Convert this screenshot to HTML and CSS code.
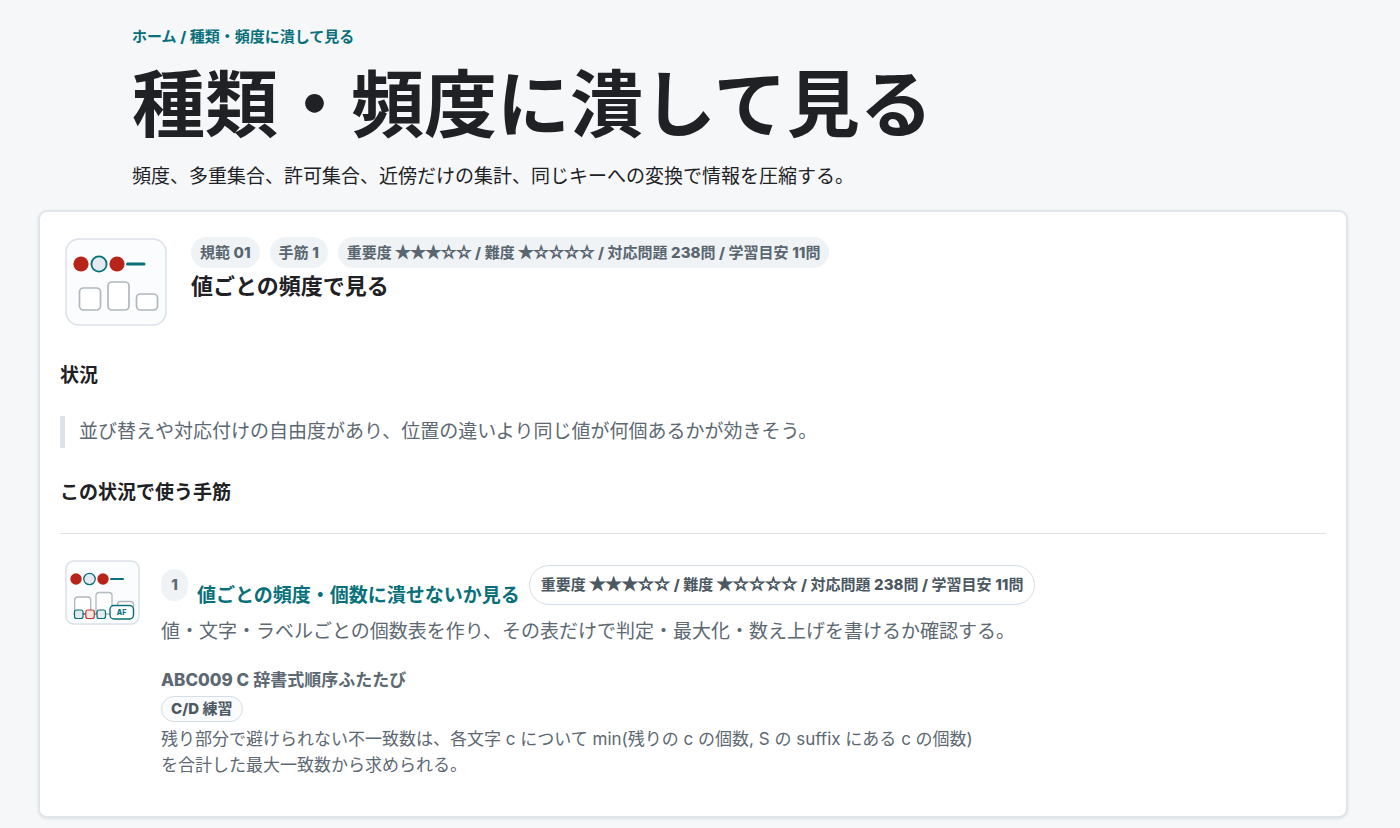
FILE: index.html
```html
<!DOCTYPE html>
<html lang="ja">
<head>
<meta charset="utf-8">
<meta name="viewport" content="width=device-width, initial-scale=1">
<title>種類・頻度に潰して見る</title>
<link rel="stylesheet" href="styles.css">
</head>
<body>
<header class="page-header">
  <nav class="breadcrumb"><a href="#">ホーム</a> <b>/</b> <a href="#">種類・頻度に潰して見る</a></nav>
  <h1 class="page-title">種類・頻度に潰して見る</h1>
  <p class="lead">頻度、多重集合、許可集合、近傍だけの集計、同じキーへの変換で情報を圧縮する。</p>
</header>
<main class="page-main">
  <article class="card">
    <div class="card-head">
      <svg class="card-figure" viewBox="0 0 102 88" aria-hidden="true">
        <rect class="frame" x="1" y="1" width="100" height="86" rx="13"/>
        <circle class="dot" cx="16" cy="26" r="7.6"/>
        <circle class="ring" cx="34" cy="26" r="7.6"/>
        <circle class="dot" cx="52" cy="26" r="7.6"/>
        <path class="dash" d="M62.500 26h16.500"/>
        <rect class="bin" x="14.500" y="50" width="21" height="22" rx="4"/>
        <rect class="bin" x="43" y="44" width="21" height="28" rx="4"/>
        <rect class="bin" x="71.500" y="56" width="21" height="16" rx="4"/>
      </svg>
      <div class="card-heading">
        <div class="tags">
          <span class="tag">規範 <b>01</b></span>
          <span class="tag">手筋 <b>1</b></span>
          <span class="tag">重要度 <span class="stars">★★★☆☆</span> <b>/</b> 難度 <span class="stars">★☆☆☆☆</span> <b>/</b> 対応問題 <b>238</b>問 <b>/</b> 学習目安 <b>11</b>問</span>
        </div>
        <h2 class="card-title">値ごとの頻度で見る</h2>
      </div>
    </div>
    <h3 class="section-title">状況</h3>
    <blockquote class="situation">並び替えや対応付けの自由度があり、位置の違いより同じ値が何個あるかが効きそう。</blockquote>
    <h3 class="section-title">この状況で使う手筋</h3>
    <section class="method">
      <svg class="method-figure" viewBox="0 0 75 65" aria-hidden="true">
        <rect class="frame" x="1" y="1" width="73" height="63" rx="8"/>
        <circle class="dot" cx="11" cy="19" r="5.700"/>
        <circle class="ring thin" cx="24.500" cy="19" r="5.700"/>
        <circle class="dot" cx="38" cy="19" r="5.700"/>
        <path class="dash thin" d="M46 19h12"/>
        <rect class="bin thin" x="9.700" y="37" width="16" height="17" rx="3"/>
        <rect class="bin thin" x="31" y="32.500" width="16" height="21.500" rx="3"/>
        <rect class="bin thin" x="52.500" y="41.500" width="16" height="12" rx="3"/>
        <path class="dash hair" d="M9 54h31"/>
        <rect class="cell" x="9.500" y="50" width="8.500" height="8.500" rx="2"/>
        <rect class="cell hot" x="20.800" y="50" width="8.500" height="8.500" rx="2"/>
        <rect class="cell" x="32" y="50" width="8.500" height="8.500" rx="2"/>
        <rect class="badge" x="45" y="45.500" width="23.500" height="13.500" rx="4"/>
        <text class="badge-text" x="56.500" y="55">AF</text>
      </svg>
      <div class="method-body">
        <div class="method-head">
          <span class="method-number">1</span>
          <a class="method-title" href="#">値ごとの頻度・個数に潰せないか見る</a>
          <span class="method-meta">重要度 <span class="stars">★★★☆☆</span> <b>/</b> 難度 <span class="stars">★☆☆☆☆</span> <b>/</b> 対応問題 <b>238</b>問 <b>/</b> 学習目安 <b>11</b>問</span>
        </div>
        <p class="method-text">値・文字・ラベルごとの個数表を作り、その表だけで判定・最大化・数え上げを書けるか確認する。</p>
        <div class="example">
          <h4 class="example-title"><b>ABC009 C</b> 辞書式順序ふたたび</h4>
          <span class="level"><b>C/D</b> 練習</span>
          <p class="example-text">残り部分で避けられない不一致数は、各文字 c について min(残りの c の個数, S の suffix にある c の個数) を合計した最大一致数から求められる。</p>
        </div>
      </div>
    </section>
  </article>
</main>
</body>
</html>
```
FILE: styles.css
```css
* { box-sizing: border-box; }

body {
  margin: 0;
  background: #f6f7f9;
  color: #202124;
  font-family: Inter, "Noto Sans CJK JP", sans-serif;
  font-size: 19px;
  line-height: 32px;
}

h1, h2, h3, h4, p, blockquote { margin: 0; }

a { color: inherit; text-decoration: none; }

b { font-weight: 800; }

.page-header { padding: 24px 132px 0; }

.breadcrumb {
  color: #08707a;
  font-size: 15px;
  font-weight: 700;
  line-height: 26px;
}

.page-title {
  margin-top: 15px;
  font-size: 73px;
  font-weight: 700;
  line-height: 80px;
}

.lead { margin-top: 16px; }

.page-main { padding: 17px 52px 10px 38px; }

.card {
  padding: 25px 20px 38px;
  background: #fff;
  border: 2px solid #dfe5eb;
  border-radius: 9px;
  box-shadow: 0 1px 3px rgba(30, 50, 70, 0.1);
}

.card-head {
  display: flex;
  gap: 24px;
  padding-left: 5px;
}

.card-figure { flex: none; width: 102px; height: 88px; margin-top: 1px; }

.tags { display: flex; flex-wrap: wrap; gap: 10px; }

.tag {
  padding: 0 9px;
  border-radius: 16px;
  background: #eff3f6;
  color: #596670;
  font-size: 15px;
  font-weight: 700;
  line-height: 31px;
}

.stars {
  font-family: "DejaVu Sans", sans-serif;
  font-size: 17px;
  font-weight: 400;
  line-height: 1;
  -webkit-text-stroke: 1px currentColor;
}

.card-title { font-size: 22px; line-height: 37px; }

.section-title { margin-top: 26px; font-size: 19px; line-height: 32px; }
.card-head + .section-title { margin-top: 34px; }

.situation {
  margin-top: 24px;
  padding-left: 14px;
  border-left: 5px solid #dce2ea;
  color: #5c6872;
}

.situation + .section-title { margin-top: 29px; }

.method {
  display: flex;
  gap: 21px;
  margin-top: 24px;
  padding: 26px 0 0 5px;
  border-top: 1px solid #dfe3e8;
}

.method-figure { flex: none; width: 75px; height: 65px; }

.method-body { flex: 1; color: #5c6872; }

.method-head { display: flex; flex-wrap: wrap; gap: 9px; padding-top: 5px; }

.method-number {
  width: 27px;
  height: 32px;
  margin-top: 4px;
  border-radius: 14px;
  background: #eff3f6;
  font-size: 15px;
  font-weight: 800;
  text-align: center;
}

.method-title { align-self: flex-end; color: #08707a; font-weight: 700; line-height: 18px; }

.method-meta {
  padding: 0 11px;
  border: 1px solid #d5dde5;
  border-radius: 20px;
  color: #4b5761;
  font-size: 15px;
  font-weight: 700;
  line-height: 38px;
}

.method-meta .stars { font-size: 18px; }

.method-text { margin-top: 11px; }

.example { max-width: 820px; margin-top: 19px; }

.example-title { font-size: 17px; font-weight: 700; line-height: 26px; }

.level {
  display: block;
  width: fit-content;
  margin: 3px 0 4px;
  padding: 0 9px;
  border: 1px solid #d5dde5;
  border-radius: 14px;
  background: #f9fbfd;
  color: #4b5761;
  font-size: 15px;
  font-weight: 700;
  line-height: 24px;
}

.example-text { font-size: 17px; line-height: 26px; }

.frame { fill: #fbfcfe; stroke: #dbe1e9; stroke-width: 1.5; }
.dot { fill: #b82419; }
.ring { fill: #e4eaf0; stroke: #08707a; stroke-width: 1.8; }
.dash { fill: none; stroke: #08707a; stroke-width: 3; stroke-linecap: round; }
.bin { fill: #fff; stroke: #b0b7bd; stroke-width: 1.7; }
.thin { stroke-width: 1.3; }
.dash.thin { stroke-width: 2; }
.hair { stroke-width: 1; }
.cell { fill: #e4eaf0; stroke: #08707a; stroke-width: 1.2; }
.cell.hot { fill: #fde6e4; stroke: #c33930; }
.badge { fill: #fff; stroke: #08707a; stroke-width: 1.4; }
.badge-text { fill: #08707a; font-size: 7px; font-weight: 800; text-anchor: middle; }
```
